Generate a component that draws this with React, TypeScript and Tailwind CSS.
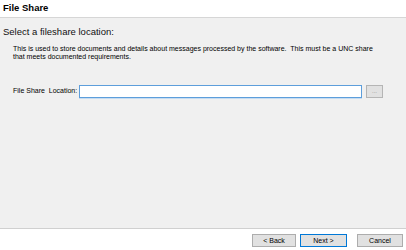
export default function App() {
  return (
    <div className="w-[406px] h-[250px] flex flex-col bg-white overflow-hidden font-['Liberation_Sans',Arial,sans-serif] text-black">
      <div className="h-[18px] shrink-0 bg-white px-[3px] pt-[2px] border-b border-[#d6d6d6]">
        <div className="text-[9.5px] leading-[12px] font-bold">File Share</div>
      </div>
      <div className="h-[211px] shrink-0 bg-[#f0f0f0] border-b border-[#d0d0d0] flex flex-col">
        <div className="pt-[8px] px-[3px] text-[9.5px] leading-[12px] text-[#111]">
          Select a fileshare location:
        </div>
        <div className="mt-[7px] pl-[13px] pr-[20px] text-[7px] leading-[8.3px] whitespace-pre">
          {"This is used to store documents and details about messages processed by the software.  This must be a UNC share\nthat meets documented requirements."}
        </div>
        <div className="mt-[23px] flex items-center pl-[13px]">
          <span className="text-[7px] leading-[8px] whitespace-pre w-[66px]">{"File Share  Location:"}</span>
          <div className="w-[283px] h-[13px] bg-white border border-[#5d9edb] shadow-[0_1px_0_#c5dcf2]" />
          <button className="ml-[4px] w-[17px] h-[13px] bg-[#e1e1e1] border border-[#b5b5b5] flex items-center justify-center text-[6px] leading-[6px] text-[#8a8a8a] pb-[1px]">
            ...
          </button>
        </div>
      </div>
      <div className="flex-1 bg-white flex justify-end items-start pt-[5px] pr-[3px]">
        <button className="w-[44px] h-[13px] bg-[#e1e1e1] border border-[#adadad] text-[7px] leading-[11px] text-black">
          {"< Back"}
        </button>
        <button className="ml-[4px] w-[47px] h-[13px] bg-[#e1e1e1] border border-[#0078d7] text-[7px] leading-[11px] text-black">
          {"Next >"}
        </button>
        <button className="ml-[10px] w-[46px] h-[13px] bg-[#e1e1e1] border border-[#adadad] text-[7px] leading-[11px] text-black">
          Cancel
        </button>
      </div>
    </div>
  );
}
